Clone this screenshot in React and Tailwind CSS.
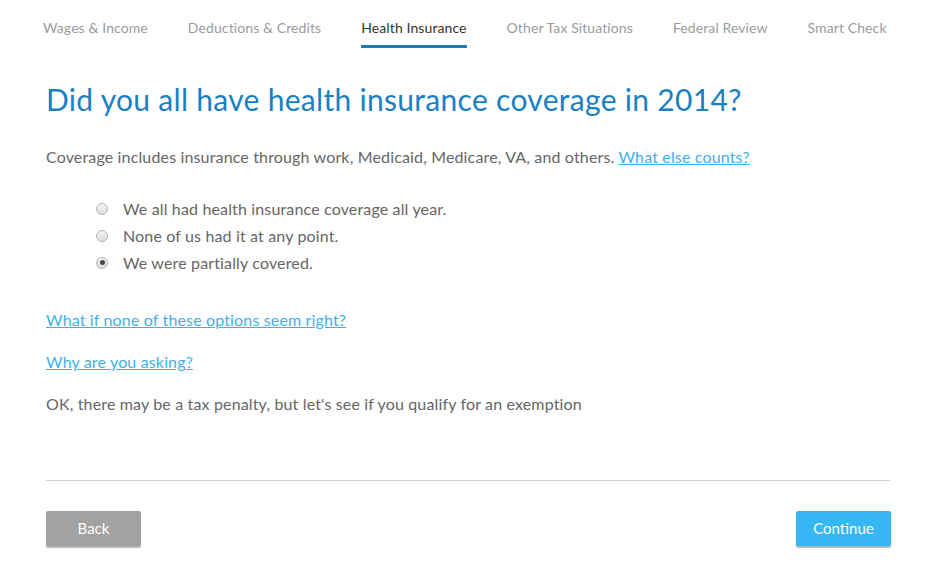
import React from "react";

const tabs = [
  "Wages & Income",
  "Deductions & Credits",
  "Health Insurance",
  "Other Tax Situations",
  "Federal Review",
  "Smart Check",
];

const options = [
  { label: "We all had health insurance coverage all year.", checked: false },
  { label: "None of us had it at any point.", checked: false },
  { label: "We were partially covered.", checked: true },
];

const Radio = ({ checked }) => (
  <span className="w-[12px] h-[12px] rounded-full border border-[#b5b5b5] bg-gradient-to-b from-[#f4f4f4] to-[#dcdcdc] flex items-center justify-center shrink-0">
    {checked && <span className="w-[5px] h-[5px] rounded-full bg-[#4a4a4a]" />}
  </span>
);

const App = () => {
  return (
    <div
      className="w-[936px] h-[573px] bg-white text-[#666] overflow-hidden"
      style={{ fontFamily: "Lato, 'Open Sans', sans-serif" }}
    >
      {/* Step tabs */}
      <nav className="flex gap-[40px] pl-[43px] pt-[17px] text-[14px] tracking-[0.1px]">
        {tabs.map((t) => {
          const active = t === "Health Insurance";
          return (
            <div
              key={t}
              className={`pb-[7px] border-b-[3px] ${
                active ? "border-[#1a7ec0] text-[#333]" : "border-transparent text-[#9b9b9b]"
              }`}
            >
              {t}
            </div>
          );
        })}
      </nav>

      <div className="px-[46px]">
        <h1 className="mt-[33px] text-[30px] tracking-[0.3px] text-[#1a80c4] leading-[36px]">
          Did you all have health insurance coverage in 2014?
        </h1>

        <p className="mt-[29px] text-[16px] tracking-[0.15px] leading-[22px]">
          Coverage includes insurance through work, Medicaid, Medicare, VA, and others.{" "}
          <a href="#" className="text-[#3fb0ea] underline">
            What else counts?
          </a>
        </p>

        <div className="mt-[27px] pl-[50px] flex flex-col text-[16px] tracking-[0.15px]">
          {options.map((o) => (
            <label key={o.label} className="flex items-center gap-[15px] h-[27px]">
              <Radio checked={o.checked} />
              <span>{o.label}</span>
            </label>
          ))}
        </div>

        <div className="mt-[33px] flex flex-col gap-[20px] text-[16px] tracking-[0.15px] leading-[22px]">
          <a href="#" className="text-[#3fb0ea] underline self-start">
            What if none of these options seem right?
          </a>
          <a href="#" className="text-[#3fb0ea] underline self-start">
            Why are you asking?
          </a>
          <p>OK, there may be a tax penalty, but let's see if you qualify for an exemption</p>
        </div>

        <hr className="mt-[65px] w-[844px] border-t border-[#cfcfcf]" />

        <div className="mt-[30px] w-[845px] flex justify-between">
          <button className="w-[95px] h-[35px] rounded-[2px] bg-[#a2a2a2] text-white text-[15px] shadow-[0_2px_1px_rgba(0,0,0,0.3)]">
            Back
          </button>
          <button className="w-[95px] h-[35px] rounded-[2px] bg-[#36b6f2] text-white text-[15px] shadow-[0_2px_1px_rgba(0,0,0,0.3)]">
            Continue
          </button>
        </div>
      </div>
    </div>
  );
};

export default App;
